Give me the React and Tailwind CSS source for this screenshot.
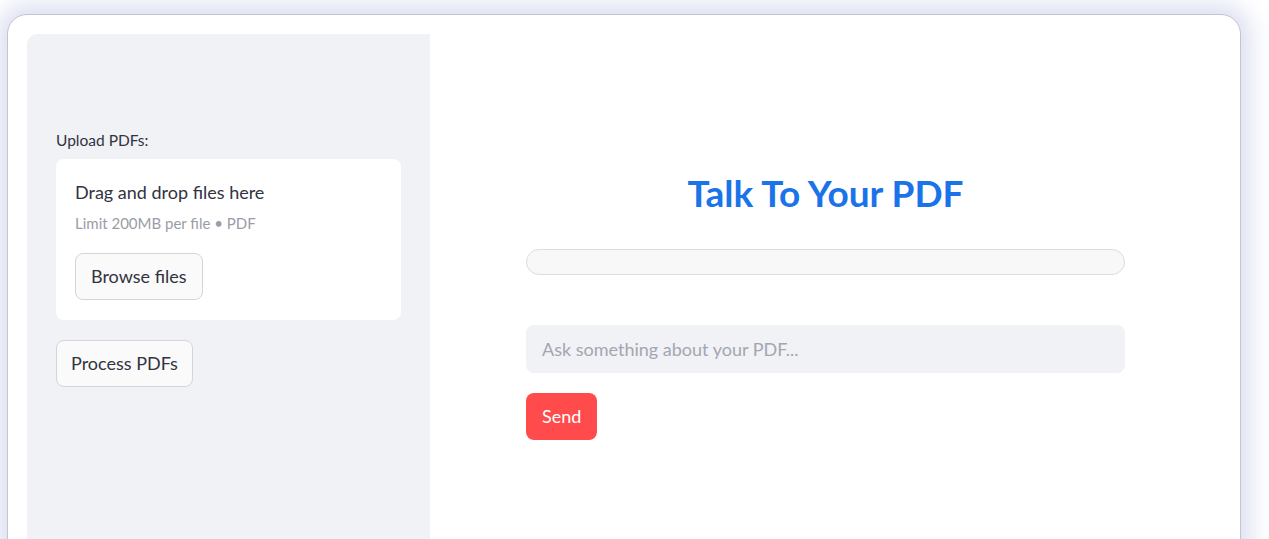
export default function App() {
  return (
    <div
      className="h-[539px] overflow-hidden bg-white pl-[7px] pt-[14px] pr-[28px]"
      style={{ fontFamily: 'Lato, "Noto Sans", sans-serif' }}
    >
      <div className="flex h-[560px] rounded-t-[20px] border border-[#c4c5cc] bg-white p-[19px] shadow-[0_0_22px_10px_rgba(212,217,238,0.8)]">
        {/* Sidebar */}
        <aside className="w-[403px] shrink-0 rounded-tl-[10px] bg-[#f0f2f6] px-[29px] pt-[96px]">
          <p className="text-[15.5px] leading-[20px] text-[#31333f]">Upload PDFs:</p>
          <div className="mt-[9px] rounded-[8px] bg-white px-[19px] pt-[21px] pb-[20px]">
            <p className="text-[18px] leading-[24px] text-[#31333f]">Drag and drop files here</p>
            <p className="mt-[9px] text-[15px] leading-[20px] text-[#9a9ca6]">Limit 200MB per file • PDF</p>
            <button className="mt-[20px] h-[47px] rounded-[8px] border border-[#d4d5da] bg-[#fafafb] px-[15px] text-[18px] text-[#31333f]">
              Browse files
            </button>
          </div>
          <button className="mt-[20px] h-[47px] rounded-[8px] border border-[#d4d5da] bg-[#fafafb] px-[14px] text-[18px] text-[#31333f]">
            Process PDFs
          </button>
        </aside>

        {/* Main */}
        <main className="flex flex-1 justify-center pt-[139px]">
          <div className="w-[599px]">
            <h1 className="text-center text-[37px] font-bold leading-[40px] text-[#1a73e8]">Talk To Your PDF</h1>
            <div className="mt-[36px] h-[26px] rounded-full border border-[#dcdde2] bg-[#f8f8f9]" />
            <div className="mt-[50px] flex h-[48px] items-center rounded-[8px] bg-[#f0f2f6] px-[16px] text-[18px] text-[#a3a6b0]">
              Ask something about your PDF...
            </div>
            <button className="mt-[20px] h-[47px] rounded-[8px] bg-[#ff4b4b] px-[16px] text-[18px] text-white">
              Send
            </button>
          </div>
        </main>
      </div>
    </div>
  );
}
